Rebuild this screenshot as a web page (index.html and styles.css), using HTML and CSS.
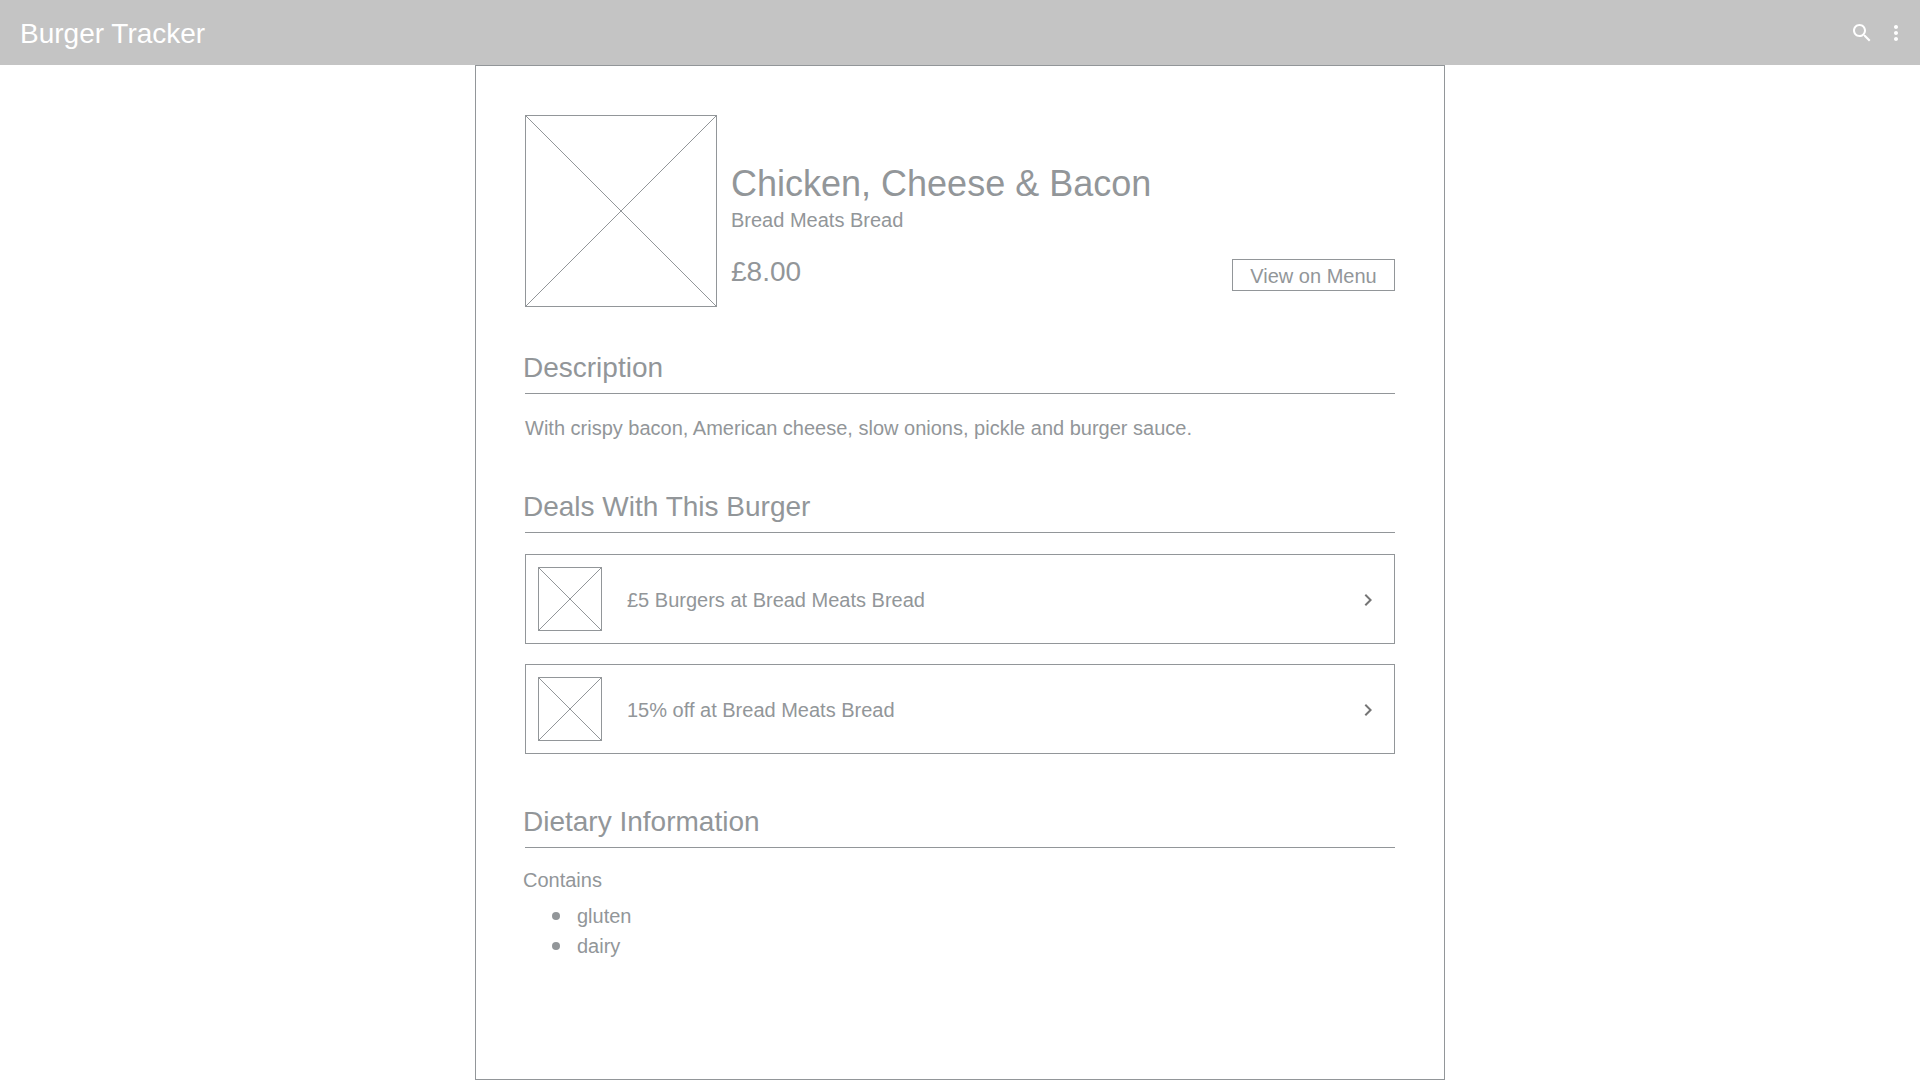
FILE: index.html
```html
<!DOCTYPE html>
<html lang="en">
<head>
  <meta charset="utf-8">
  <title>Burger Tracker</title>
  <link rel="stylesheet" href="styles.css">
</head>
<body>
  <header class="app-bar">
    <div class="app-title">Burger Tracker</div>
    <div class="app-actions">
      <button class="icon-button" type="button" aria-label="Search">
        <svg viewBox="0 0 24 24" width="24" height="24" fill="currentColor"><path d="M15.5 14h-.79l-.28-.27C15.41 12.59 16 11.11 16 9.5 16 5.91 13.09 3 9.5 3S3 5.91 3 9.5 5.91 16 9.5 16c1.61 0 3.09-.59 4.23-1.57l.27.28v.79l5 4.99L20.49 19l-4.99-5zm-6 0C7.01 14 5 11.99 5 9.5S7.01 5 9.5 5 14 7.01 14 9.5 11.99 14 9.5 14z"/></svg>
      </button>
      <button class="icon-button" type="button" aria-label="More options">
        <svg viewBox="0 0 24 24" width="24" height="24" fill="currentColor"><path d="M12 8c1.1 0 2-.9 2-2s-.9-2-2-2-2 .9-2 2 .9 2 2 2zm0 2c-1.1 0-2 .9-2 2s.9 2 2 2 2-.9 2-2-.9-2-2-2zm0 6c-1.1 0-2 .9-2 2s.9 2 2 2 2-.9 2-2-.9-2-2-2z"/></svg>
      </button>
    </div>
  </header>

  <main class="page">
    <div class="product">
      <svg class="photo photo-large" viewBox="0 0 190 190" aria-hidden="true"><path d="M0 0L190 190M190 0L0 190"/></svg>
      <div class="product-info">
        <h1 class="product-name">Chicken, Cheese &amp; Bacon</h1>
        <p class="restaurant">Bread Meats Bread</p>
        <div class="price-row">
          <span class="price">£8.00</span>
          <button class="menu-button" type="button">View on Menu</button>
        </div>
      </div>
    </div>

    <section class="description">
      <h2 class="section-title">Description</h2>
      <p class="description-text">With crispy bacon, American cheese, slow onions, pickle and burger sauce.</p>
    </section>

    <section class="deals">
      <h2 class="section-title">Deals With This Burger</h2>
      <div class="deal-list">
        <a class="deal" href="#deal-burgers">
          <svg class="photo photo-small" viewBox="0 0 62 62" aria-hidden="true"><path d="M0 0L62 62M62 0L0 62"/></svg>
          <span class="deal-name">£5 Burgers at Bread Meats Bread</span>
          <svg class="chevron" viewBox="0 0 24 24" width="24" height="24" aria-hidden="true"><path d="M10 6L8.59 7.41 13.17 12l-4.58 4.59L10 18l6-6z"/></svg>
        </a>
        <a class="deal" href="#deal-discount">
          <svg class="photo photo-small" viewBox="0 0 62 62" aria-hidden="true"><path d="M0 0L62 62M62 0L0 62"/></svg>
          <span class="deal-name">15% off at Bread Meats Bread</span>
          <svg class="chevron" viewBox="0 0 24 24" width="24" height="24" aria-hidden="true"><path d="M10 6L8.59 7.41 13.17 12l-4.58 4.59L10 18l6-6z"/></svg>
        </a>
      </div>
    </section>

    <section class="dietary">
      <h2 class="section-title">Dietary Information</h2>
      <p class="contains">Contains</p>
      <ul class="allergens">
        <li class="allergen">gluten</li>
        <li class="allergen">dairy</li>
      </ul>
    </section>
  </main>
</body>
</html>
```
FILE: styles.css
```css
:root {
  --ink: #929699;
  --outdent: -2px;
}

* {
  box-sizing: border-box;
}

body {
  display: flex;
  flex-direction: column;
  min-height: 100vh;
  margin: 0;
  background: #fff;
  color: var(--ink);
  font-family: "Liberation Sans", Arial, sans-serif;
  font-size: 20px;
  line-height: 30px;
}

h1, h2, p, ul {
  margin: 0;
  padding: 0;
  font-weight: 400;
}

.app-bar {
  display: flex;
  align-items: center;
  justify-content: space-between;
  height: 65px;
  padding: 0 12px 0 20px;
  background: #c4c4c4;
  color: #fff;
}

.app-title {
  padding-top: 2px;
  font-size: 28px;
  line-height: 40px;
}

.app-actions {
  display: flex;
  gap: 10px;
}

.icon-button {
  display: flex;
  padding: 0;
  border: 0;
  background: none;
  color: inherit;
}

.page {
  flex: 1;
  width: 100%;
  max-width: 970px;
  margin: 0 auto;
  padding: 49px;
  border: 1px solid var(--ink);
}

.product {
  display: flex;
  gap: 14px;
}

.photo {
  flex: none;
  border: 1px solid var(--ink);
  fill: none;
  stroke: var(--ink);
}

.photo-large {
  width: 192px;
  height: 192px;
}

.photo-small {
  width: 64px;
  height: 64px;
}

.product-info {
  display: flex;
  flex: 1;
  flex-direction: column;
  justify-content: flex-end;
  padding-bottom: 16px;
}

.product-name {
  font-size: 36px;
  line-height: 44px;
}

.restaurant {
  line-height: 28px;
}

.price-row {
  display: flex;
  align-items: flex-end;
  justify-content: space-between;
  margin-top: 19px;
}

.price {
  font-size: 28px;
  line-height: 38px;
}

.menu-button {
  width: 163px;
  height: 32px;
  padding: 2px 0 0;
  border: 1px solid var(--ink);
  background: none;
  color: inherit;
  font: inherit;
  line-height: 28px;
}

.section-title {
  padding-bottom: 4px;
  border-bottom: 1px solid var(--ink);
  font-size: 28px;
  line-height: 42px;
  text-indent: var(--outdent);
}

.description {
  margin-top: 40px;
}

.description-text {
  margin-top: 19px;
}

.deals {
  margin-top: 43px;
}

.deal-list {
  display: flex;
  flex-direction: column;
  gap: 20px;
  margin-top: 21px;
}

.deal {
  display: flex;
  align-items: center;
  padding: 12px 14px 12px 12px;
  border: 1px solid var(--ink);
  color: inherit;
  text-decoration: none;
}

.deal-name {
  flex: 1;
  margin-left: 25px;
  padding-top: 2px;
}

.chevron {
  margin-top: 2px;
  fill: #757575;
}

.dietary {
  margin-top: 47px;
}

.contains {
  margin-top: 17px;
  text-indent: var(--outdent);
}

.allergens {
  margin-top: 6px;
  list-style: none;
}

.allergen {
  display: flex;
  align-items: center;
  gap: 17px;
  padding-left: 27px;
}

.allergen::before {
  width: 8px;
  height: 8px;
  border-radius: 50%;
  background: var(--ink);
  content: "";
}
```
